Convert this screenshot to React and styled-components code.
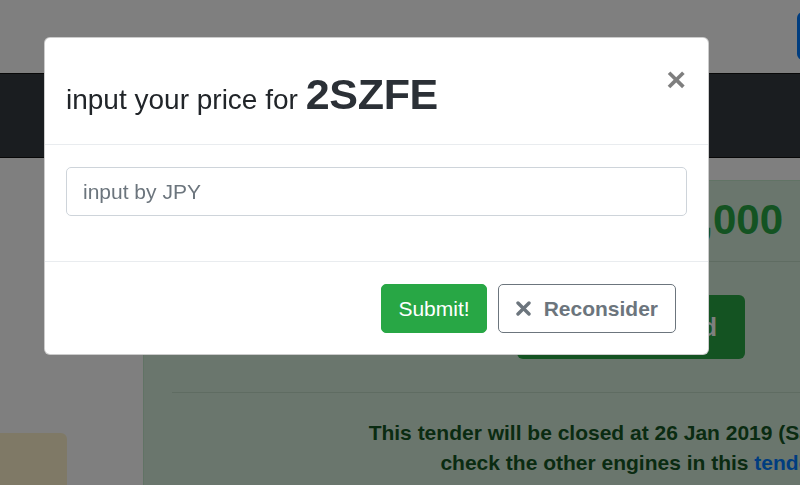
import React from 'react';
import styled, { createGlobalStyle } from 'styled-components';

const GlobalStyle = createGlobalStyle`
	html, body {
		margin: 0;
		padding: 0;
		overflow: hidden;
		background: #fff;
		font-family: "Liberation Sans", Arial, Helvetica, sans-serif;
		color: #212529;
	}
`;

const Page = styled.div`
	width: 800px;
	height: 485px;
	overflow: hidden;
`;

const TopBar = styled.div`
	height: 73px;
	display: flex;
	align-items: center;
	justify-content: flex-end;
	margin-right: -60px;
`;

const TopButton = styled.div`
	width: 63px;
	height: 48px;
	margin-top: -1px;
	border-radius: 6px;
	background: #007bff;
`;

const NavBar = styled.div`
	height: 83px;
	background: #343a40;
	border-top: 1px solid #111;
	border-bottom: 1px solid #111;
`;

const Content = styled.div`
	display: flex;
	align-items: flex-start;
`;

const SideColumn = styled.div`
	flex: none;
	width: 143px;
	padding-top: 275px;
`;

const NoticeBox = styled.div`
	width: 75px;
	height: 80px;
	margin-left: -8px;
	border-radius: 6px;
	background: #fff3cd;
`;

const TenderPanel = styled.div`
	flex: none;
	width: 957px;
	margin-top: 22px;
	padding: 15px 28px 40px;
	background: #d4edda;
	border: 1px solid #c3e6cb;
	border-radius: 6px;
`;

const Price = styled.div`
	width: 611px;
	text-align: right;
	font-size: 42px;
	line-height: 48px;
	font-weight: 700;
	color: #28a745;
`;

const Rule = styled.hr`
	margin: ${(p) => p.$gap};
	border: 0;
	border-top: 1px solid #bfd9c5;
`;

const BidButton = styled.div`
	width: 228px;
	height: 64px;
	margin-left: 345px;
	display: flex;
	align-items: center;
	justify-content: flex-end;
	padding-right: 28px;
	box-sizing: border-box;
	border-radius: 6px;
	background: #28a745;
	color: #fff;
	font-size: 25px;
	font-weight: 700;
`;

const ClosingText = styled.p`
	margin: 0;
	text-align: center;
	font-size: 21px;
	line-height: 30px;
	font-weight: 700;
	color: #155724;

	a {
		color: #007bff;
		text-decoration: none;
	}
`;

const Backdrop = styled.div`
	position: fixed;
	inset: 0;
	background: rgba(0, 0, 0, 0.5);
`;

const Modal = styled.div`
	position: fixed;
	top: 37px;
	left: 44px;
	width: 665px;
	box-sizing: border-box;
	background: #fff;
	border: 1px solid rgba(0, 0, 0, 0.2);
	border-radius: 6px;
	overflow: hidden;
`;

const ModalHeader = styled.div`
	display: flex;
	align-items: flex-start;
	justify-content: space-between;
	height: 107px;
	box-sizing: border-box;
	padding: 22px 22px 0 21px;
	border-bottom: 1px solid #e9ecef;
`;

const Title = styled.h5`
	margin: 0;
	padding-top: 9px;
	font-size: 28px;
	line-height: 50px;
	font-weight: 400;
	color: #212529;
`;

const Code = styled.span`
	font-size: 43px;
	font-weight: 700;
	color: #2b3036;
	letter-spacing: -0.3px;
`;

const CloseButton = styled.button`
	border: 0;
	background: transparent;
	padding: 0;
	margin-top: 2px;
	font-family: "Liberation Sans", Arial, sans-serif;
	font-size: 34px;
	line-height: 34px;
	font-weight: 700;
	color: #000;
	opacity: 0.5;
	cursor: pointer;
`;

const ModalBody = styled.div`
	padding: 22px 21px 22px 21px;
	border-bottom: 1px solid #e9ecef;
`;

const PriceInput = styled.input`
	display: block;
	width: 100%;
	height: 49px;
	box-sizing: border-box;
	margin-bottom: 23px;
	padding: 0 16px;
	border: 1px solid #ced4da;
	border-radius: 5px;
	font-family: "Liberation Sans", Arial, sans-serif;
	font-size: 21px;
	color: #495057;
	outline: none;

	&::placeholder {
		color: #6c757d;
	}
`;

const ModalFooter = styled.div`
	display: flex;
	justify-content: flex-end;
	gap: 11px;
	padding: 22px 32px 21px;
`;

const Button = styled.button`
	height: 49px;
	box-sizing: border-box;
	display: flex;
	align-items: center;
	gap: 13px;
	padding: 0 ${(p) => (p.$outline ? '17px' : '16px')};
	border-radius: 5px;
	font-family: "Liberation Sans", Arial, sans-serif;
	font-size: 21px;
	font-weight: ${(p) => (p.$outline ? 700 : 400)};
	border: 1px solid ${(p) => (p.$outline ? '#6c757d' : '#28a745')};
	background: ${(p) => (p.$outline ? '#fff' : '#28a745')};
	color: ${(p) => (p.$outline ? '#6c757d' : '#fff')};
	cursor: pointer;
`;

const TimesIcon = () => (
	<svg width="15" height="15" viewBox="0 0 15 15" aria-hidden="true">
		<path d="M2 2 L13 13 M13 2 L2 13" stroke="currentColor" strokeWidth="3.4" strokeLinecap="round" fill="none" />
	</svg>
);

export default function App() {
	return (
		<Page>
			<GlobalStyle />
			<TopBar>
				<TopButton />
			</TopBar>
			<NavBar />
			<Content>
				<SideColumn>
					<NoticeBox />
				</SideColumn>
				<TenderPanel>
					<Price>¥ 1,000</Price>
					<Rule $gap="17px 0 33px" />
					<BidButton>Place your bid</BidButton>
					<Rule $gap="33px 0 25px" />
					<ClosingText>This tender will be closed at 26 Jan 2019 (Sat) 23:59 JST.</ClosingText>
					<ClosingText>
						check the other engines in this <a href="#">tender list</a>.
					</ClosingText>
				</TenderPanel>
			</Content>

			<Backdrop />
			<Modal>
				<ModalHeader>
					<Title>
						input your price for <Code>2SZFE</Code>
					</Title>
					<CloseButton>×</CloseButton>
				</ModalHeader>
				<ModalBody>
					<PriceInput placeholder="input by JPY" />
				</ModalBody>
				<ModalFooter>
					<Button>Submit!</Button>
					<Button $outline>
						<TimesIcon />
						Reconsider
					</Button>
				</ModalFooter>
			</Modal>
		</Page>
	);
}
